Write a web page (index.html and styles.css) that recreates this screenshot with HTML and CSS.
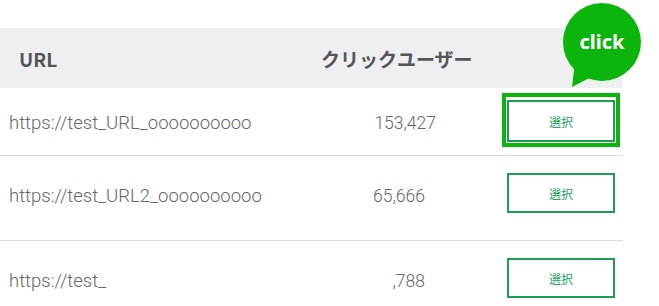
FILE: index.html
```html
<!DOCTYPE html>
<html lang="ja">
<head>
    <meta charset="UTF-8">
    <meta name="viewport" content="width=device-width, initial-scale=1.0">
    <title>URL選択</title>
    <link rel="stylesheet" href="styles.css">
</head>
<body>

    <div class="page">
        <div class="url-table">
            <div class="table-head">
                <div class="head-url">URL</div>
                <div class="head-num">クリックユーザー</div>
            </div>

            <!-- 選択中の行 -->
            <div class="row row-active">
                <div class="cell-url">https://test_URL_oooooooooo</div>
                <div class="cell-num">153,427</div>
                <div class="cell-btn">
                    <span class="ring"><button class="select-btn">選択</button></span>
                </div>
            </div>

            <div class="row row-second">
                <div class="cell-url">https://test_URL2_oooooooooo</div>
                <div class="cell-num">65,666</div>
                <div class="cell-btn"><button class="select-btn">選択</button></div>
            </div>

            <div class="row row-last">
                <div class="cell-url">https://test_</div>
                <div class="cell-num">,788</div>
                <div class="cell-btn"><button class="select-btn">選択</button></div>
            </div>
        </div>

        <div class="bubble">click</div>
    </div>

</body>
</html>
```

FILE: styles.css
```css
body {
    font-family: "Noto Sans CJK JP", "Noto Sans", sans-serif;
    margin: 0;
    padding: 0;
    background-color: #fff;
    color: #666;
}

.page {
    position: relative;
    width: 659px;
    height: 306px;
    overflow: hidden;
}

.url-table {
    margin-top: 28px;
    width: 623px;
}

.table-head {
    display: flex;
    align-items: center;
    height: 60px;
    padding-left: 19px;
    background-color: #eeeff1;
    color: #555;
    font-size: 19px;
    font-weight: bold;
}

.head-url {
    width: 302px;
}

.row {
    display: flex;
    align-items: flex-start;
    padding-left: 9px;
    border-bottom: 1px solid #dcdcdc;
    font-family: Roboto, "Noto Sans CJK JP", sans-serif;
    font-weight: 300;
}

.cell-url {
    width: 300px;
    font-size: 18.5px;
    white-space: nowrap;
}

.cell-num {
    width: 116px;
    margin-right: 83px;
    font-size: 17.5px;
    text-align: right;
}

.row-active {
    height: 62px;
    padding-top: 5px;
}

.row-active .cell-url, .row-active .cell-num {
    line-height: 60px;
}

.row-active .cell-num {
    width: 127px;
    margin-right: 72px;
}

.row-second, .row-last {
    padding-top: 17px;
}

.row-second {
    height: 67px;
}

.row-last {
    height: 60px;
    border-bottom: none;
}

.row-second .cell-url, .row-second .cell-num, .row-last .cell-url, .row-last .cell-num {
    line-height: 46px;
}

.cell-btn {
    margin-left: -1px;
}

.select-btn {
    display: block;
    box-sizing: border-box;
    width: 108px;
    height: 40px;
    background-color: #fff;
    border: 2px solid #1f9d55;
    color: #24a35a;
    font-family: "Noto Sans CJK JP", sans-serif;
    font-size: 12px;
    cursor: pointer;
}

.ring {
    display: block;
    margin-left: -5px;
    padding: 3px 1px 1px 1px;
    border: 4px solid #0bb50b;
    background-color: #fff;
}

.ring .select-btn {
    height: 42px;
}

.bubble {
    position: absolute;
    left: 563px;
    top: 3px;
    width: 78px;
    height: 78px;
    border-radius: 50%;
    background-color: #0bb50b;
    color: #fff;
    font-family: "Noto Sans", sans-serif;
    font-size: 20px;
    font-weight: bold;
    line-height: 78px;
    text-align: center;
}

.bubble::after {
    content: "";
    position: absolute;
    left: 0;
    top: 0;
    width: 40px;
    height: 90px;
    background-color: #0bb50b;
    clip-path: polygon(12px 58px, 32px 72px, 9px 84px);
}
```
